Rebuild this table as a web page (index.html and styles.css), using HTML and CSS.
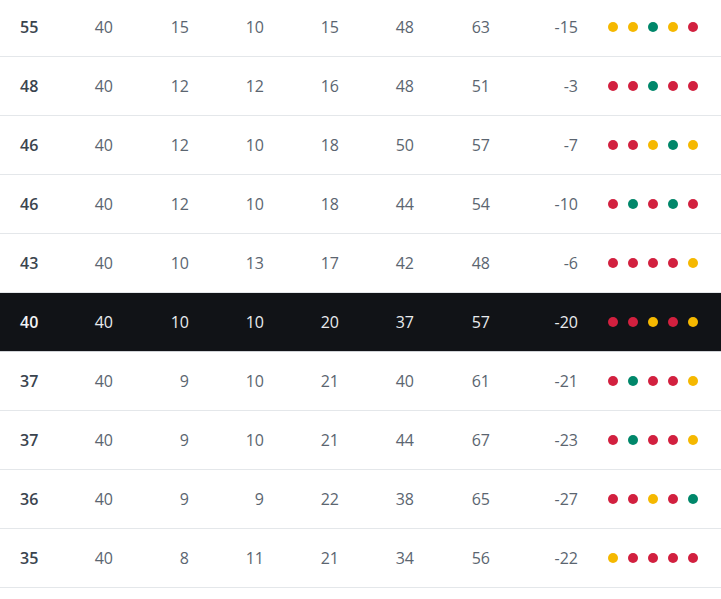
FILE: index.html
```html
<!DOCTYPE html>
<html>
<head>
<meta charset="utf-8">
<link rel="stylesheet" href="styles.css">
</head>
<body>
<div class="table">
  <div class="row"><span class="pts">55</span><span>40</span><span>15</span><span>10</span><span>15</span><span>48</span><span>63</span><span>-15</span><span class="form"><i class="d y"></i><i class="d y"></i><i class="d g"></i><i class="d y"></i><i class="d r"></i></span></div>
  <div class="row"><span class="pts">48</span><span>40</span><span>12</span><span>12</span><span>16</span><span>48</span><span>51</span><span>-3</span><span class="form"><i class="d r"></i><i class="d r"></i><i class="d g"></i><i class="d r"></i><i class="d r"></i></span></div>
  <div class="row"><span class="pts">46</span><span>40</span><span>12</span><span>10</span><span>18</span><span>50</span><span>57</span><span>-7</span><span class="form"><i class="d r"></i><i class="d r"></i><i class="d y"></i><i class="d g"></i><i class="d y"></i></span></div>
  <div class="row"><span class="pts">46</span><span>40</span><span>12</span><span>10</span><span>18</span><span>44</span><span>54</span><span>-10</span><span class="form"><i class="d r"></i><i class="d g"></i><i class="d r"></i><i class="d g"></i><i class="d r"></i></span></div>
  <div class="row"><span class="pts">43</span><span>40</span><span>10</span><span>13</span><span>17</span><span>42</span><span>48</span><span>-6</span><span class="form"><i class="d r"></i><i class="d r"></i><i class="d r"></i><i class="d r"></i><i class="d y"></i></span></div>
  <div class="row active"><span class="pts">40</span><span>40</span><span>10</span><span>10</span><span>20</span><span>37</span><span>57</span><span>-20</span><span class="form"><i class="d r"></i><i class="d r"></i><i class="d y"></i><i class="d r"></i><i class="d y"></i></span></div>
  <div class="row"><span class="pts">37</span><span>40</span><span>9</span><span>10</span><span>21</span><span>40</span><span>61</span><span>-21</span><span class="form"><i class="d r"></i><i class="d g"></i><i class="d r"></i><i class="d r"></i><i class="d y"></i></span></div>
  <div class="row"><span class="pts">37</span><span>40</span><span>9</span><span>10</span><span>21</span><span>44</span><span>67</span><span>-23</span><span class="form"><i class="d r"></i><i class="d g"></i><i class="d r"></i><i class="d r"></i><i class="d y"></i></span></div>
  <div class="row"><span class="pts">36</span><span>40</span><span>9</span><span>9</span><span>22</span><span>38</span><span>65</span><span>-27</span><span class="form"><i class="d r"></i><i class="d r"></i><i class="d y"></i><i class="d r"></i><i class="d g"></i></span></div>
  <div class="row"><span class="pts">35</span><span>40</span><span>8</span><span>11</span><span>21</span><span>34</span><span>56</span><span>-22</span><span class="form"><i class="d y"></i><i class="d r"></i><i class="d r"></i><i class="d r"></i><i class="d r"></i></span></div>
</div>
</body>
</html>
```
FILE: styles.css
```css
html, body {
  margin: 0;
  padding: 0;
  background: #ffffff;
}
.table {
  margin-top: -2px;
  font-family: "Open Sans", "Liberation Sans", sans-serif;
  font-size: 16px;
  color: #5b6570;
}
.row {
  display: grid;
  grid-template-columns: 60px 53px 76px 75px 75px 75px 76px 88px 1fr;
  align-items: center;
  height: 58px;
  border-bottom: 1px solid #e4e7ea;
}
.row > span {
  text-align: right;
  line-height: 20px;
}
.row > .pts {
  text-align: left;
  padding-left: 20px;
  font-weight: 600;
  color: #3a444e;
}
.row.active {
  background: #111317;
  color: #e9ebee;
  border-bottom-color: #d0d3d7;
}
.row.active > .pts {
  color: #f2f3f5;
}
.form {
  display: flex;
  gap: 10px;
  padding-left: 30px;
  align-items: center;
}
.d {
  display: block;
  width: 10px;
  height: 10px;
  border-radius: 50%;
}
.d.y { background: #f5b800; }
.d.r { background: #d2203f; }
.d.g { background: #00876a; }
```
